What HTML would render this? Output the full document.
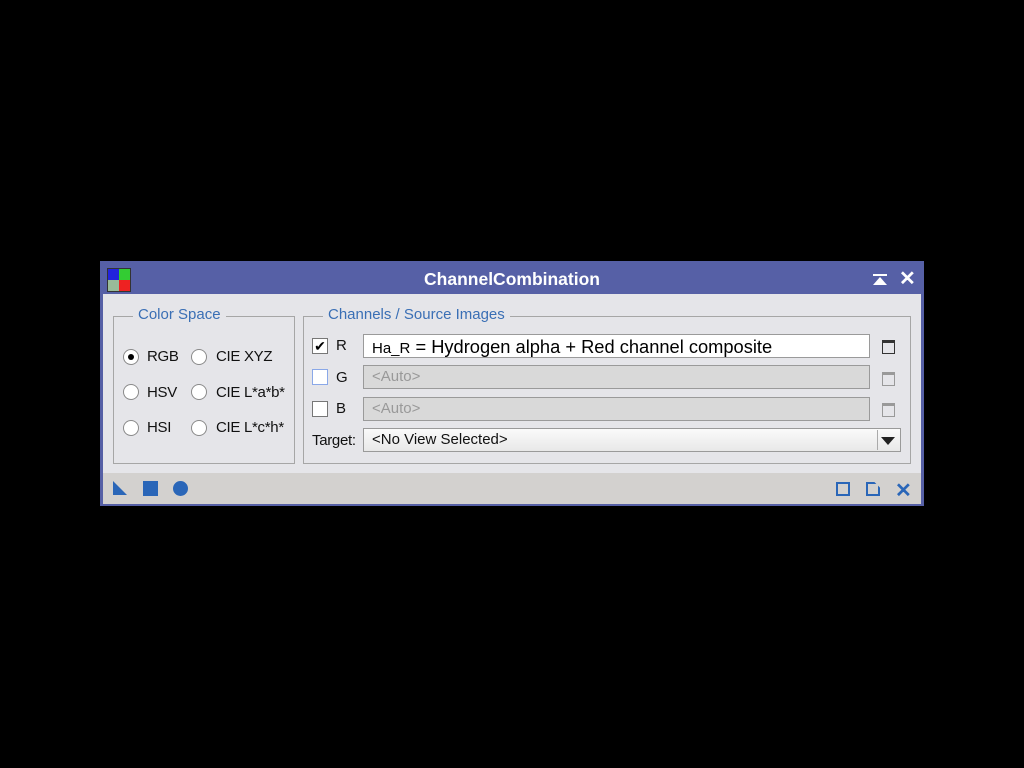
<!DOCTYPE html>
<html><head><style>
body{margin:0;background:#000;width:1024px;height:768px;position:relative;overflow:hidden;font-family:"Liberation Sans",sans-serif;}
.a{position:absolute}
.win{left:100px;top:261px;width:824px;height:245px;background:#5660a6}
.body{left:103px;top:294px;width:818px;height:179px;background:#e5e5e9}
.tb{left:103px;top:473px;width:818px;height:31px;background:#d3d1cf}
.grp{border:1px solid #a6a6a6;}
.leg{background:#e5e5e9;color:#3a6fb5;font-size:15px;padding:0 5px}
.rad{width:14px;height:14px;border:1px solid #8a8a8a;border-radius:50%;background:#fff}
.t{font-size:15px;color:#111;letter-spacing:-0.3px}
.cb{width:14px;height:14px;border:1px solid #777;background:#fff}
.fld{height:24px;border:1px solid #9a9a9a;box-sizing:border-box;font-size:15px;padding:2px 8px}
.ic{width:11px;height:10px;border:1px solid #333;border-top-width:3px}
</style></head><body>
<div class="a win"></div>
<div class="a" style="left:107px;top:268px;width:22px;height:22px;background:conic-gradient(#3c3 0 25%,#e22 25% 50%,#9b9 50% 75%,#22d 75%);border:1px solid #333"></div>
<div class="a" style="left:100px;top:269px;width:824px;text-align:center;color:#fff;font-weight:bold;font-size:17.5px">ChannelCombination</div>
<div class="a" style="left:873px;top:274px;width:14px;height:2px;background:#fff"></div>
<div class="a" style="left:873px;top:277px;width:0;height:0;border-left:7px solid transparent;border-right:7px solid transparent;border-bottom:8px solid #fff"></div>
<div class="a" style="left:899px;top:266px;color:#fff;font-size:20px;font-weight:bold">✕</div>
<div class="a body"></div>
<div class="a tb"></div>
<div class="a grp" style="left:113px;top:316px;width:180px;height:146px"></div>
<div class="a leg" style="left:133px;top:306px">Color Space</div>
<div class="a grp" style="left:303px;top:316px;width:606px;height:146px"></div>
<div class="a leg" style="left:323px;top:306px">Channels / Source Images</div>
<div class="a rad" style="left:123px;top:349px"><div class="a" style="left:4px;top:4px;width:6px;height:6px;border-radius:50%;background:#000"></div></div>
<div class="a t" style="left:147px;top:348px">RGB</div>
<div class="a rad" style="left:191px;top:349px"></div><div class="a t" style="left:216px;top:348px">CIE XYZ</div>
<div class="a rad" style="left:123px;top:384px"></div><div class="a t" style="left:147px;top:384px">HSV</div>
<div class="a rad" style="left:191px;top:384px"></div><div class="a t" style="left:216px;top:384px">CIE L*a*b*</div>
<div class="a rad" style="left:123px;top:420px"></div><div class="a t" style="left:147px;top:419px">HSI</div>
<div class="a rad" style="left:191px;top:420px"></div><div class="a t" style="left:216px;top:419px">CIE L*c*h*</div>
<div class="a cb" style="left:312px;top:338px;font-size:14px;line-height:14px;text-align:center">✔</div>
<div class="a t" style="left:336px;top:337px">R</div>
<div class="a cb" style="left:312px;top:369px;border-color:#8aa8e8"></div><div class="a t" style="left:336px;top:369px">G</div>
<div class="a cb" style="left:312px;top:401px"></div><div class="a t" style="left:336px;top:400px">B</div>
<div class="a fld" style="left:363px;top:334px;width:507px;background:#fff;color:#000;font-size:18.3px;padding-top:1px"><span style="font-size:15px">Ha_R</span> = Hydrogen alpha + Red channel composite</div>
<div class="a fld" style="left:363px;top:365px;width:507px;background:#d9d9d9;color:#999">&lt;Auto&gt;</div>
<div class="a fld" style="left:363px;top:397px;width:507px;background:#d9d9d9;color:#999">&lt;Auto&gt;</div>
<div class="a ic" style="left:882px;top:340px"></div>
<div class="a ic" style="left:882px;top:372px;border-color:#999"></div>
<div class="a ic" style="left:882px;top:403px;border-color:#999"></div>
<div class="a t" style="left:312px;top:432px">Target:</div>
<div class="a fld" style="left:363px;top:428px;width:538px;background:linear-gradient(#fafafa,#e8e8e8);color:#111">&lt;No View Selected&gt;</div>
<div class="a" style="left:877px;top:430px;width:1px;height:20px;background:#aaa"></div>
<div class="a" style="left:881px;top:437px;width:0;height:0;border-left:7px solid transparent;border-right:7px solid transparent;border-top:8px solid #222"></div>
<div class="a" style="left:113px;top:481px;width:0;height:0;border-right:14px solid transparent;border-bottom:14px solid #2a66b8"></div>
<div class="a" style="left:143px;top:481px;width:15px;height:15px;background:#2a66b8"></div>
<div class="a" style="left:173px;top:481px;width:15px;height:15px;border-radius:50%;background:#2a66b8"></div>
<div class="a" style="left:836px;top:482px;width:10px;height:10px;border:2px solid #2a66b8"></div>
<div class="a" style="left:866px;top:482px;width:10px;height:10px;border:2px solid #2a66b8;clip-path:polygon(0 0,60% 0,100% 40%,100% 100%,0 100%)"></div>
<div class="a" style="left:895px;top:478px;color:#2a66b8;font-size:20px;font-weight:bold">✕</div>
</body></html>
